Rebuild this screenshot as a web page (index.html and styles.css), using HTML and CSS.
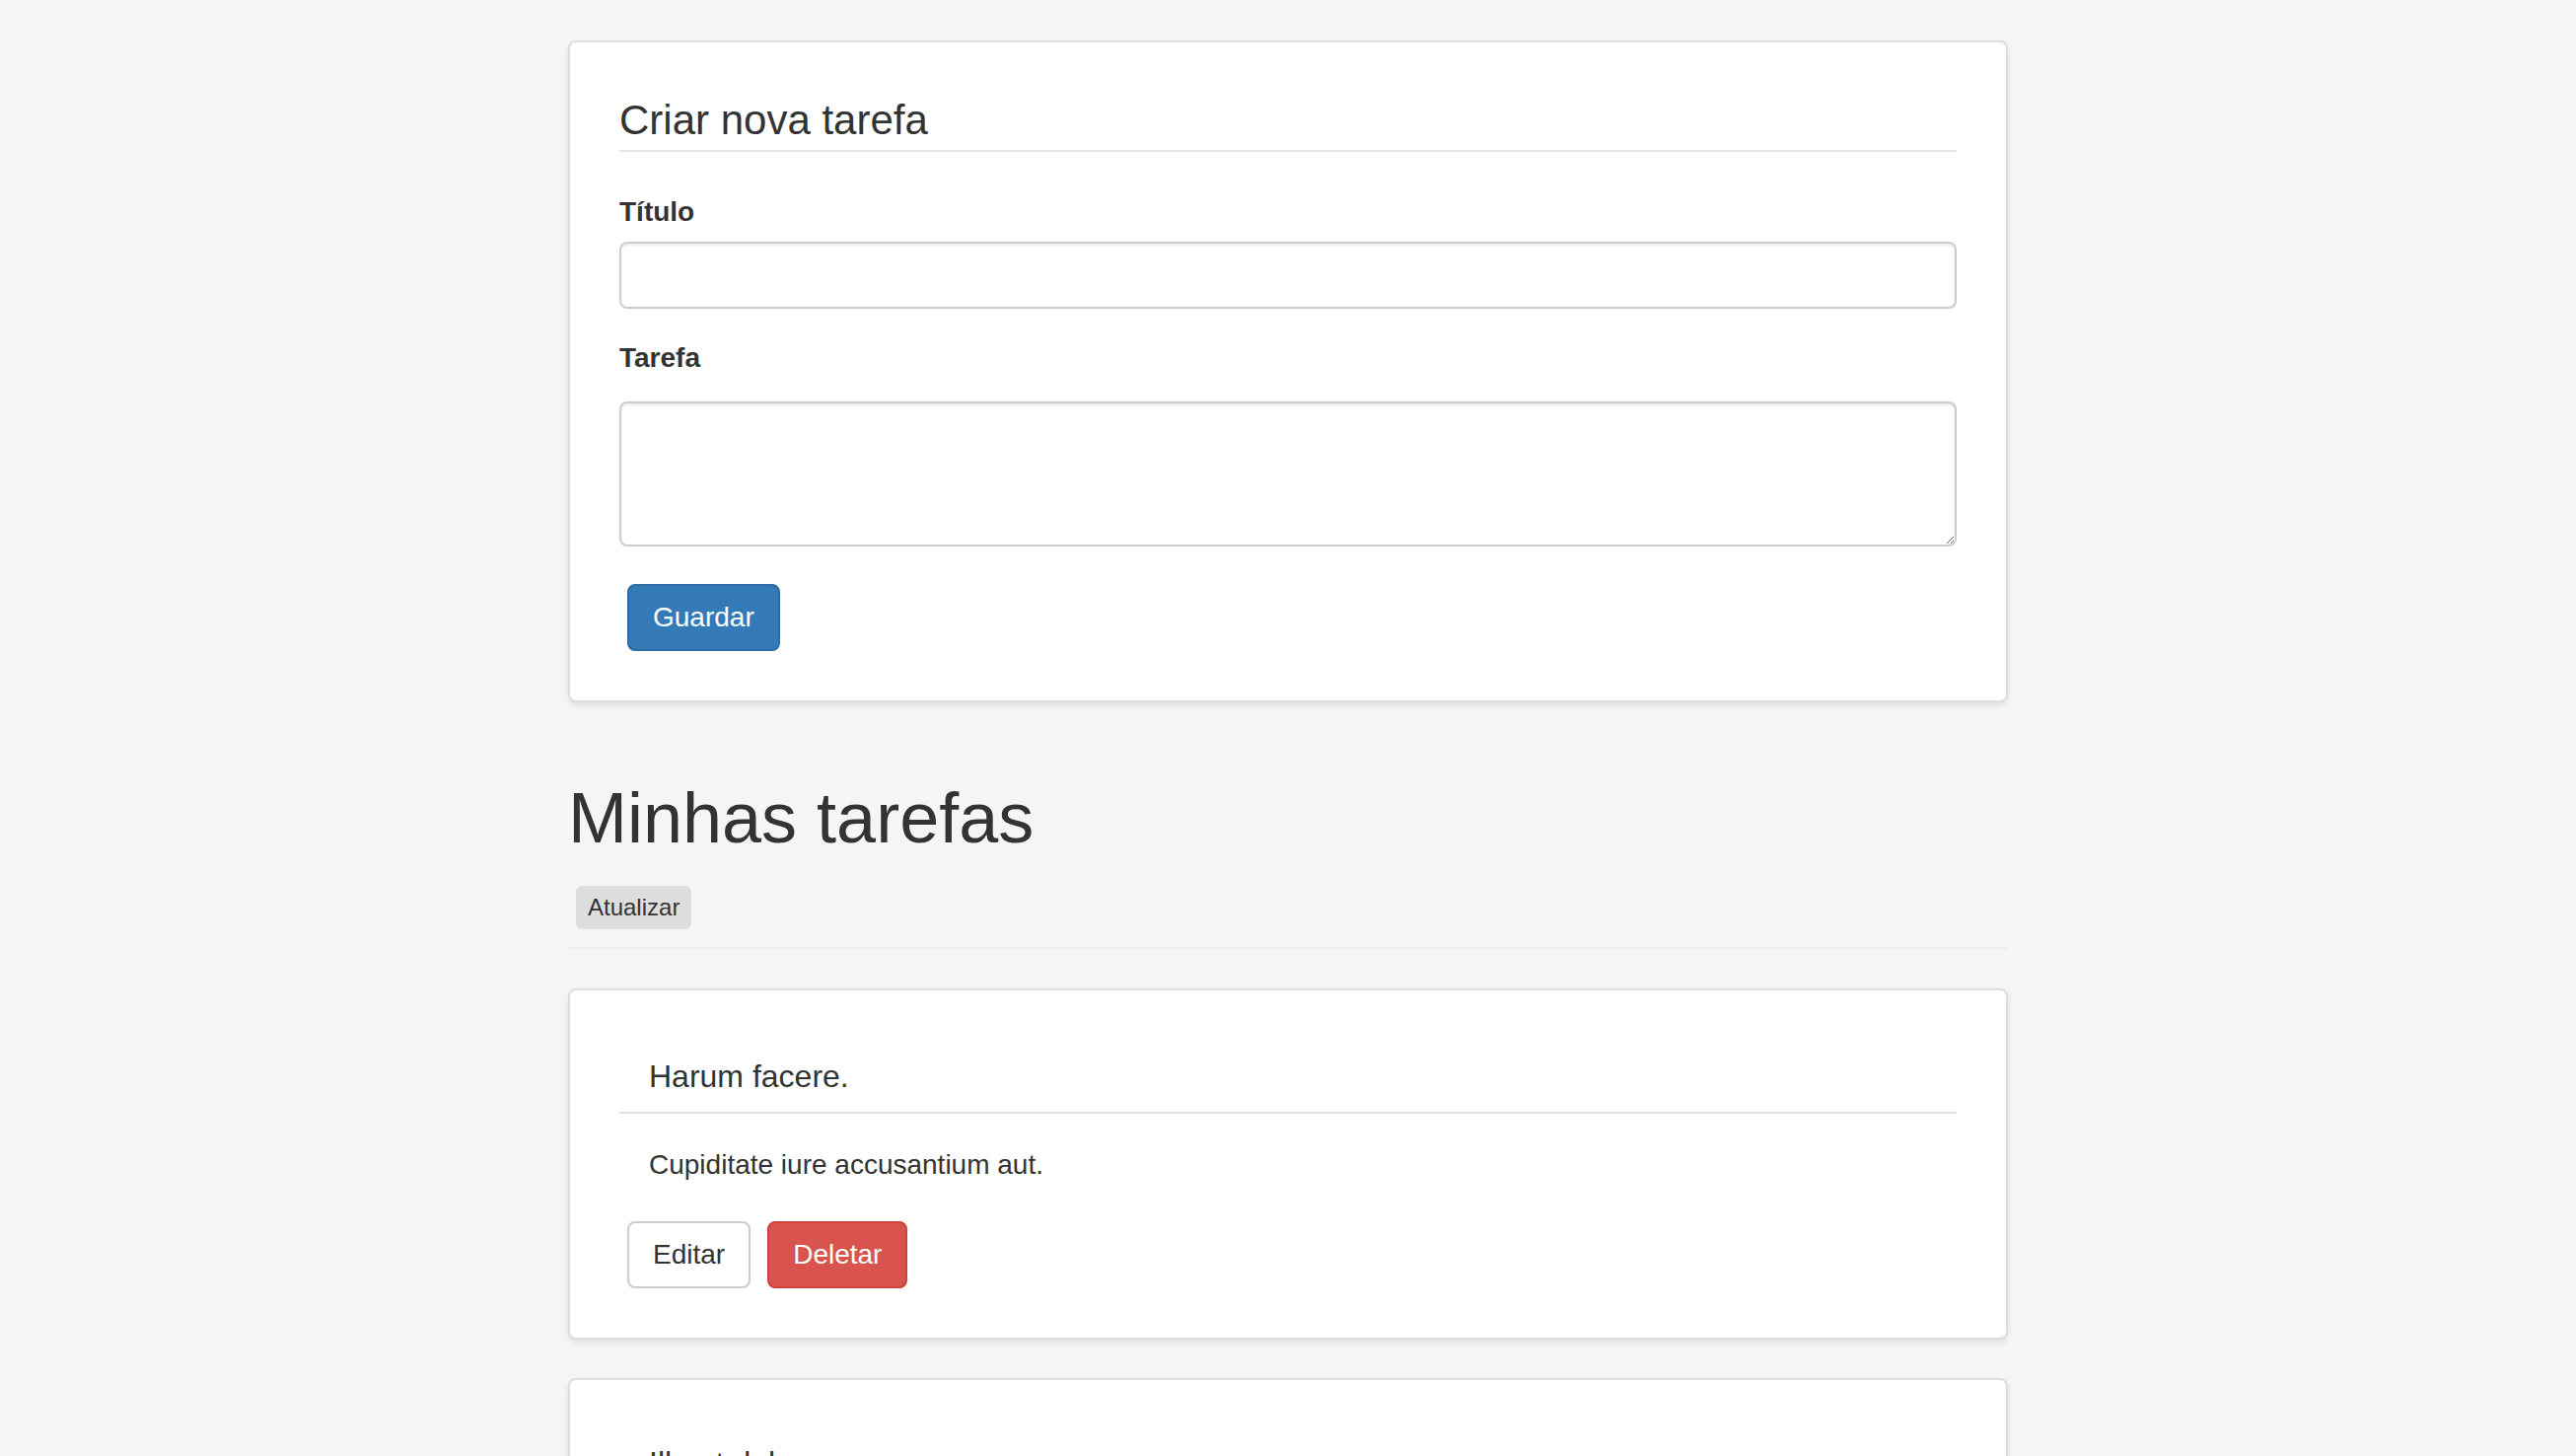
FILE: index.html
```html
<!DOCTYPE html>
<html lang="pt">
<head>
<meta charset="utf-8">
<title>Tarefas</title>
<link rel="stylesheet" href="styles.css">
</head>
<body>
<div class="container">
  <div class="card card-form">
    <form class="task-form">
      <div class="legend">Criar nova tarefa</div>
      <div class="form-group">
        <label class="label" for="titulo">Título</label>
        <input class="input" id="titulo" type="text">
      </div>
      <div class="form-group form-group-area">
        <label class="label label-area" for="tarefa">Tarefa</label>
        <textarea class="input textarea" id="tarefa"></textarea>
      </div>
      <div class="actions">
        <button type="button" class="btn btn-primary">Guardar</button>
      </div>
    </form>
  </div>

  <div class="page-header">
    <h1 class="page-title">Minhas tarefas</h1>
    <div class="header-actions">
      <button type="button" class="btn-xs">Atualizar</button>
    </div>
  </div>

  <div class="card card-task">
    <div class="task-heading">Harum facere.</div>
    <p class="task-body">Cupiditate iure accusantium aut.</p>
    <div class="actions">
      <button type="button" class="btn btn-default">Editar</button>
      <button type="button" class="btn btn-danger">Deletar</button>
    </div>
  </div>

  <div class="card card-task">
    <div class="task-heading">Illo et dolorem.</div>
    <p class="task-body">Voluptatem quia aut.</p>
    <div class="actions">
      <button type="button" class="btn btn-default">Editar</button>
      <button type="button" class="btn btn-danger">Deletar</button>
    </div>
  </div>
</div>
</body>
</html>
```

FILE: styles.css
```css
* { box-sizing: border-box; }

html, body {
  margin: 0;
  padding: 0;
}

body {
  background: #f5f5f5;
  font-family: "Liberation Sans", Arial, sans-serif;
  font-size: 28px;
  line-height: 40px;
  color: #333;
  overflow: hidden;
}

.container {
  width: 1460px;
  margin: 0 auto;
  padding-top: 41px;
}

.card {
  background: #fff;
  border: 2px solid #dedede;
  border-radius: 8px;
  box-shadow: 0 3px 6px rgba(0, 0, 0, 0.09);
}

.card-form {
  padding: 49px 50px 50px 50px;
}

.legend {
  font-size: 42px;
  line-height: 60px;
  color: #333;
  border-bottom: 2px solid #e5e5e5;
  margin-bottom: 41px;
}

.form-group {
  margin-bottom: 30px;
}

.form-group-area {
  margin-bottom: 38px;
}

.label {
  display: block;
  font-weight: bold;
  margin-bottom: 10px;
}

.label-area {
  margin-bottom: 24px;
}

.input {
  display: block;
  width: 100%;
  height: 68px;
  padding: 12px 24px;
  font-family: inherit;
  font-size: 28px;
  color: #555;
  background: #fff;
  border: 2px solid #ccc;
  border-radius: 8px;
  box-shadow: inset 0 2px 2px rgba(0, 0, 0, 0.075);
  outline: none;
  margin: 0;
}

.textarea {
  height: 147px;
  resize: vertical;
}

.actions {
  display: flex;
  gap: 17px;
  padding-left: 8px;
}

.btn {
  font-family: inherit;
  font-size: 28px;
  line-height: 40px;
  padding: 12px 24px;
  border: 2px solid transparent;
  border-radius: 8px;
  cursor: pointer;
  margin: 0;
}

.btn-primary {
  background: #337ab7;
  border-color: #2e6da4;
  color: #fff;
}

.btn-default {
  background: #fff;
  border-color: #ccc;
  color: #333;
}

.btn-danger {
  background: #d9534f;
  border-color: #d43f3a;
  color: #fff;
}

.page-header {
  margin: 78px 0 40px;
  padding-bottom: 18px;
  border-bottom: 2px solid #eee;
}

.page-title {
  margin: 0 0 29px;
  font-size: 72px;
  line-height: 79px;
  font-weight: normal;
  color: #333;
}

.header-actions {
  display: flex;
  padding-left: 8px;
}

.btn-xs {
  font-family: inherit;
  font-size: 24px;
  line-height: 36px;
  padding: 4px 12px;
  background: #ddd;
  color: #333;
  border: none;
  border-radius: 6px;
  margin: 0;
}

.card-task {
  padding: 50px 50px 50px 50px;
  margin-bottom: 39px;
}

.card-task + .card-task {
  padding-top: 47px;
}

.task-heading {
  font-size: 32px;
  line-height: 35px;
  padding: 20px 30px 18px;
  border-bottom: 2px solid #ddd;
  color: #333;
}

.task-body {
  margin: 0;
  padding: 32px 30px 37px;
}
```
